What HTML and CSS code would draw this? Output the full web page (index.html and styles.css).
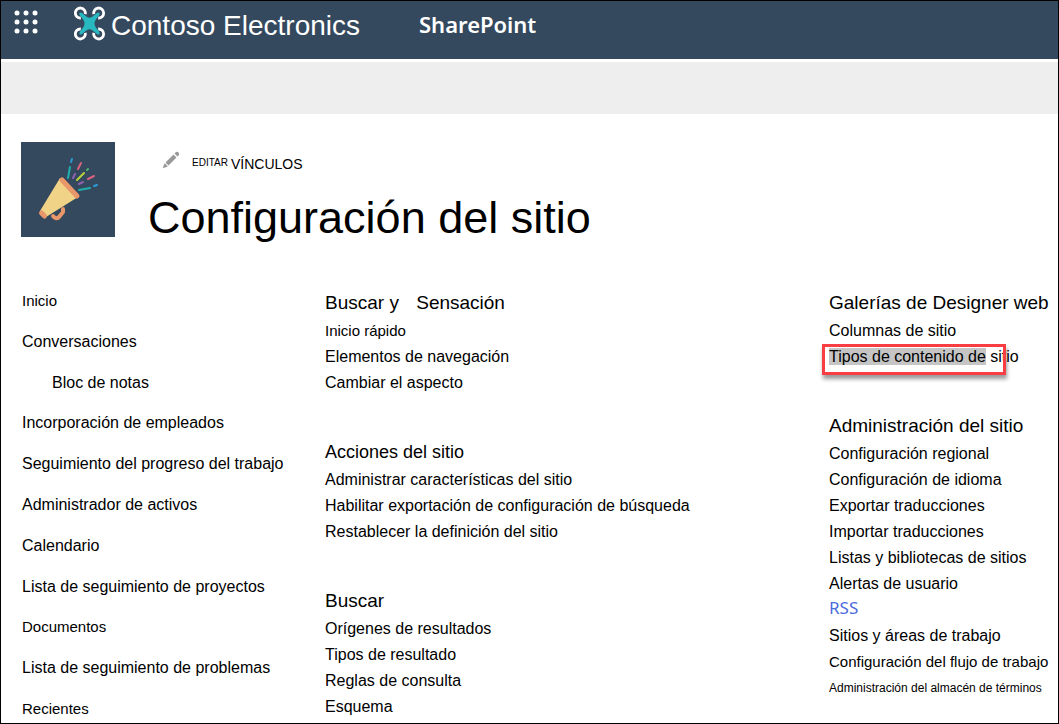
FILE: index.html
```html
<!DOCTYPE html>
<html lang="es">
<head>
    <meta charset="UTF-8">
    <meta name="viewport" content="width=device-width, initial-scale=1.0">
    <title>Configuración del sitio</title>
    <link rel="stylesheet" href="styles.css">
</head>
<body>

<header class="suite-bar">
    <button class="launcher" type="button" aria-label="Iniciador de aplicaciones">
        <svg width="24" height="24" viewBox="0 0 24 24" fill="#ffffff">
            <circle cx="3" cy="3" r="2.5"/><circle cx="12" cy="3" r="2.5"/><circle cx="21" cy="3" r="2.5"/>
            <circle cx="3" cy="12" r="2.5"/><circle cx="12" cy="12" r="2.5"/><circle cx="21" cy="12" r="2.5"/>
            <circle cx="3" cy="21" r="2.5"/><circle cx="12" cy="21" r="2.5"/><circle cx="21" cy="21" r="2.5"/>
        </svg>
    </button>
    <a class="brand" href="#">
        <svg width="32" height="36" viewBox="0 0 32 36">
            <g fill="none" stroke="#ffffff" stroke-width="2.8">
                <path d="M11.200 8.200A5 5 0 1 0 6.800 12"/>
                <path d="M19.800 8.200A5 5 0 1 1 24.200 12"/>
                <path d="M11.200 26.800A5 5 0 1 1 6.800 23"/>
                <path d="M19.800 26.800A5 5 0 1 0 24.200 23"/>
            </g>
            <path fill="#28b8bf" d="M5.500 7Q6.500 6 8 7L13 11Q15.500 12.500 18 11L23 7Q24.500 6 25.500 7Q26 8 25 9.500L21.500 14Q19.500 17.500 21.500 21L25 25.500Q26 27 25.500 28Q24.500 29 23 28L18 24Q15.500 22.500 13 24L8 28Q6.500 29 5.500 28Q5 27 6 25.500L9.500 21Q11.500 17.500 9.500 14L6 9.500Q5 8 5.500 7Z"/>
        </svg>
        <span>Contoso Electronics</span>
    </a>
    <a class="product" href="#">SharePoint</a>
</header>
<div class="ribbon"></div>

<div class="page-head">
    <a class="site-logo" href="#" aria-label="Inicio del sitio">
        <svg width="94" height="95" viewBox="0 0 94 95">
            <g fill="none" stroke-width="2" stroke-linecap="round">
                <path stroke="#1fb0ad" d="M47 36l2-11M58 48l11-2"/>
                <path stroke="#2b9bd6" d="M50 20l1-3M73 44l3-1"/>
                <path stroke="#8e62b0" d="M52 36l2-4M58 42l4-2"/>
                <path stroke="#d9627e" d="M57 27l3-6M67 37l6-3"/>
                <path stroke="#b9d53c" d="M56 38l7-7"/>
                <path stroke="#4fb36a" d="M66 28l1-1"/>
            </g>
            <path fill="none" stroke="#e8976b" stroke-width="4" stroke-linejoin="round" stroke-linecap="round" d="M32 74q3 4 6 1l4-5 0-3"/>
            <path fill="#f1d388" d="M39 36L57 55L25 75L19 69Z"/>
            <path fill="none" stroke="#e8976b" stroke-width="5" stroke-linecap="round" d="M41 38L56 54M20.500 71L23.500 74"/>
        </svg>
    </a>
    <div class="page-title">
        <button class="edit-links" type="button">
            <svg width="18" height="18" viewBox="0 0 18 18" fill="#999999">
                <path d="M12.500 2.500L15.500 5.500L17 4Q17.500 2.500 16.500 1.500Q15.500 .5 14 1ZM11.500 3.500L14.500 6.500L6.500 14.500L3.500 11.500ZM2.800 12.200L5.800 15.200L4.500 16L.8 17.200L2 13.500Z"/>
            </svg>
            <span class="edit">EDITAR</span>
            <span class="links">VÍNCULOS</span>
        </button>
        <h1>Configuración del sitio</h1>
    </div>
</div>

<div class="content">
    <nav>
        <ul class="quick-launch">
            <li class="small"><a href="#">Inicio</a></li>
            <li><a href="#">Conversaciones</a></li>
            <li class="child"><a href="#">Bloc de notas</a></li>
            <li><a href="#">Incorporación de empleados</a></li>
            <li><a href="#">Seguimiento del progreso del trabajo</a></li>
            <li><a href="#">Administrador de activos</a></li>
            <li><a href="#">Calendario</a></li>
            <li><a href="#">Lista de seguimiento de proyectos</a></li>
            <li class="small"><a href="#">Documentos</a></li>
            <li><a href="#">Lista de seguimiento de problemas</a></li>
            <li class="small"><a href="#">Recientes</a></li>
        </ul>
    </nav>

    <main class="settings">
        <section>
            <h2>Buscar y <span class="apart">Sensación</span></h2>
            <ul>
                <li class="small"><a href="#">Inicio rápido</a></li>
                <li><a href="#">Elementos de navegación</a></li>
                <li><a href="#">Cambiar el aspecto</a></li>
            </ul>
        </section>
        <section>
            <h2 class="compact">Acciones del sitio</h2>
            <ul>
                <li><a href="#">Administrar características del sitio</a></li>
                <li><a href="#">Habilitar exportación de configuración de búsqueda</a></li>
                <li><a href="#">Restablecer la definición del sitio</a></li>
            </ul>
        </section>
        <section>
            <h2>Buscar</h2>
            <ul>
                <li><a href="#">Orígenes de resultados</a></li>
                <li><a href="#">Tipos de resultado</a></li>
                <li><a href="#">Reglas de consulta</a></li>
                <li><a href="#">Esquema</a></li>
            </ul>
        </section>
    </main>

    <aside class="settings">
        <section>
            <h2>Galerías de Designer web</h2>
            <ul>
                <li><a href="#">Columnas de sitio</a></li>
                <li class="callout"><a href="#"><mark>Tipos de contenido de</mark> sitio</a></li>
            </ul>
        </section>
        <section>
            <h2>Administración del sitio</h2>
            <ul>
                <li><a href="#">Configuración regional</a></li>
                <li><a href="#">Configuración de idioma</a></li>
                <li><a href="#">Exportar traducciones</a></li>
                <li><a href="#">Importar traducciones</a></li>
                <li><a href="#">Listas y bibliotecas de sitios</a></li>
                <li><a href="#">Alertas de usuario</a></li>
                <li class="rss"><a href="#">RSS</a></li>
                <li><a href="#">Sitios y áreas de trabajo</a></li>
                <li class="small"><a href="#">Configuración del flujo de trabajo</a></li>
                <li class="tiny"><a href="#">Administración del almacén de términos</a></li>
            </ul>
        </section>
    </aside>
</div>

</body>
</html>
```
FILE: styles.css
```css
*,
*::after {
    box-sizing: border-box;
}
body {
    margin: 0;
    min-height: 100vh;
    border: 1px solid #000000;
    background: #ffffff;
    color: #000000;
    font-family: "Liberation Sans", Arial, sans-serif;
    font-size: 16px;
}
a {
    color: inherit;
    text-decoration: none;
}
a:hover {
    text-decoration: underline;
}
button {
    padding: 0;
    border: 0;
    background: none;
    color: inherit;
    font-family: inherit;
    cursor: pointer;
}
ul {
    margin: 0;
    padding: 0;
    list-style: none;
}
svg {
    display: block;
}

/* Top bars */
.suite-bar {
    display: flex;
    align-items: flex-start;
    height: 58px;
    padding: 4px 13px;
    background: #34495e;
    color: #ffffff;
}
.launcher {
    margin-top: 5px;
}
.brand {
    display: flex;
    align-items: center;
    gap: 5px;
    margin-left: 36px;
    font-size: 28px;
    line-height: 42px;
}
.brand svg {
    margin-bottom: 4px;
}
.product {
    margin-left: 59px;
    font-family: "Noto Sans", "Open Sans", sans-serif;
    font-size: 22px;
    font-weight: 600;
    line-height: 38px;
}
.ribbon {
    height: 52px;
    margin-top: 3px;
    background: #eeeeee;
}

/* Logo and title */
.page-head {
    display: flex;
    gap: 33px;
    padding: 28px 20px 0;
}
.site-logo {
    height: 95px;
    background: #34495e;
}
.edit-links {
    display: flex;
    align-items: center;
    height: 40px;
    margin-left: 14px;
}
.edit-links svg {
    margin: 0 12px 5px 0;
}
.edit {
    margin-right: 3px;
    font-size: 10px;
}
.links {
    padding-top: 3px;
    font-size: 14px;
}
h1 {
    margin: 0;
    font-size: 45px;
    font-weight: 400;
    line-height: 72px;
}

/* Columns */
.content {
    display: grid;
    grid-template-columns: 303px 1fr 220px;
    padding: 35px 9px 0 21px;
}
nav {
    display: flex;
    padding: 2px 0 1px;
}
.quick-launch {
    display: flex;
    flex-direction: column;
    justify-content: space-between;
    line-height: 20px;
}
.child {
    padding-left: 30px;
}
.settings {
    display: flex;
    flex-direction: column;
    gap: 42px;
    line-height: 26px;
    white-space: nowrap;
}
.settings ul {
    padding-top: 1px;
}
h2 {
    margin: 0;
    font-size: 19px;
    font-weight: 400;
    line-height: 28px;
}
.compact {
    font-size: 18px;
}
.apart {
    margin-left: 12px;
}
.settings li {
    height: 26px;
}
.small {
    font-size: 15px;
}
.tiny {
    font-size: 12px;
}
.rss {
    color: #4a6bdc;
    font-family: "Noto Sans", "Open Sans", sans-serif;
    font-size: 17px;
    line-height: 22px;
}

/* Highlighted link */
.callout {
    position: relative;
}
.callout::after {
    content: "";
    position: absolute;
    top: 0;
    left: -7px;
    width: 184px;
    height: 31px;
    border: 3px solid #f83e42;
    box-shadow: 1px 4px 4px rgba(0, 0, 0, 0.4);
    pointer-events: none;
}
mark {
    background: #c5c5c5;
    color: inherit;
}
```
